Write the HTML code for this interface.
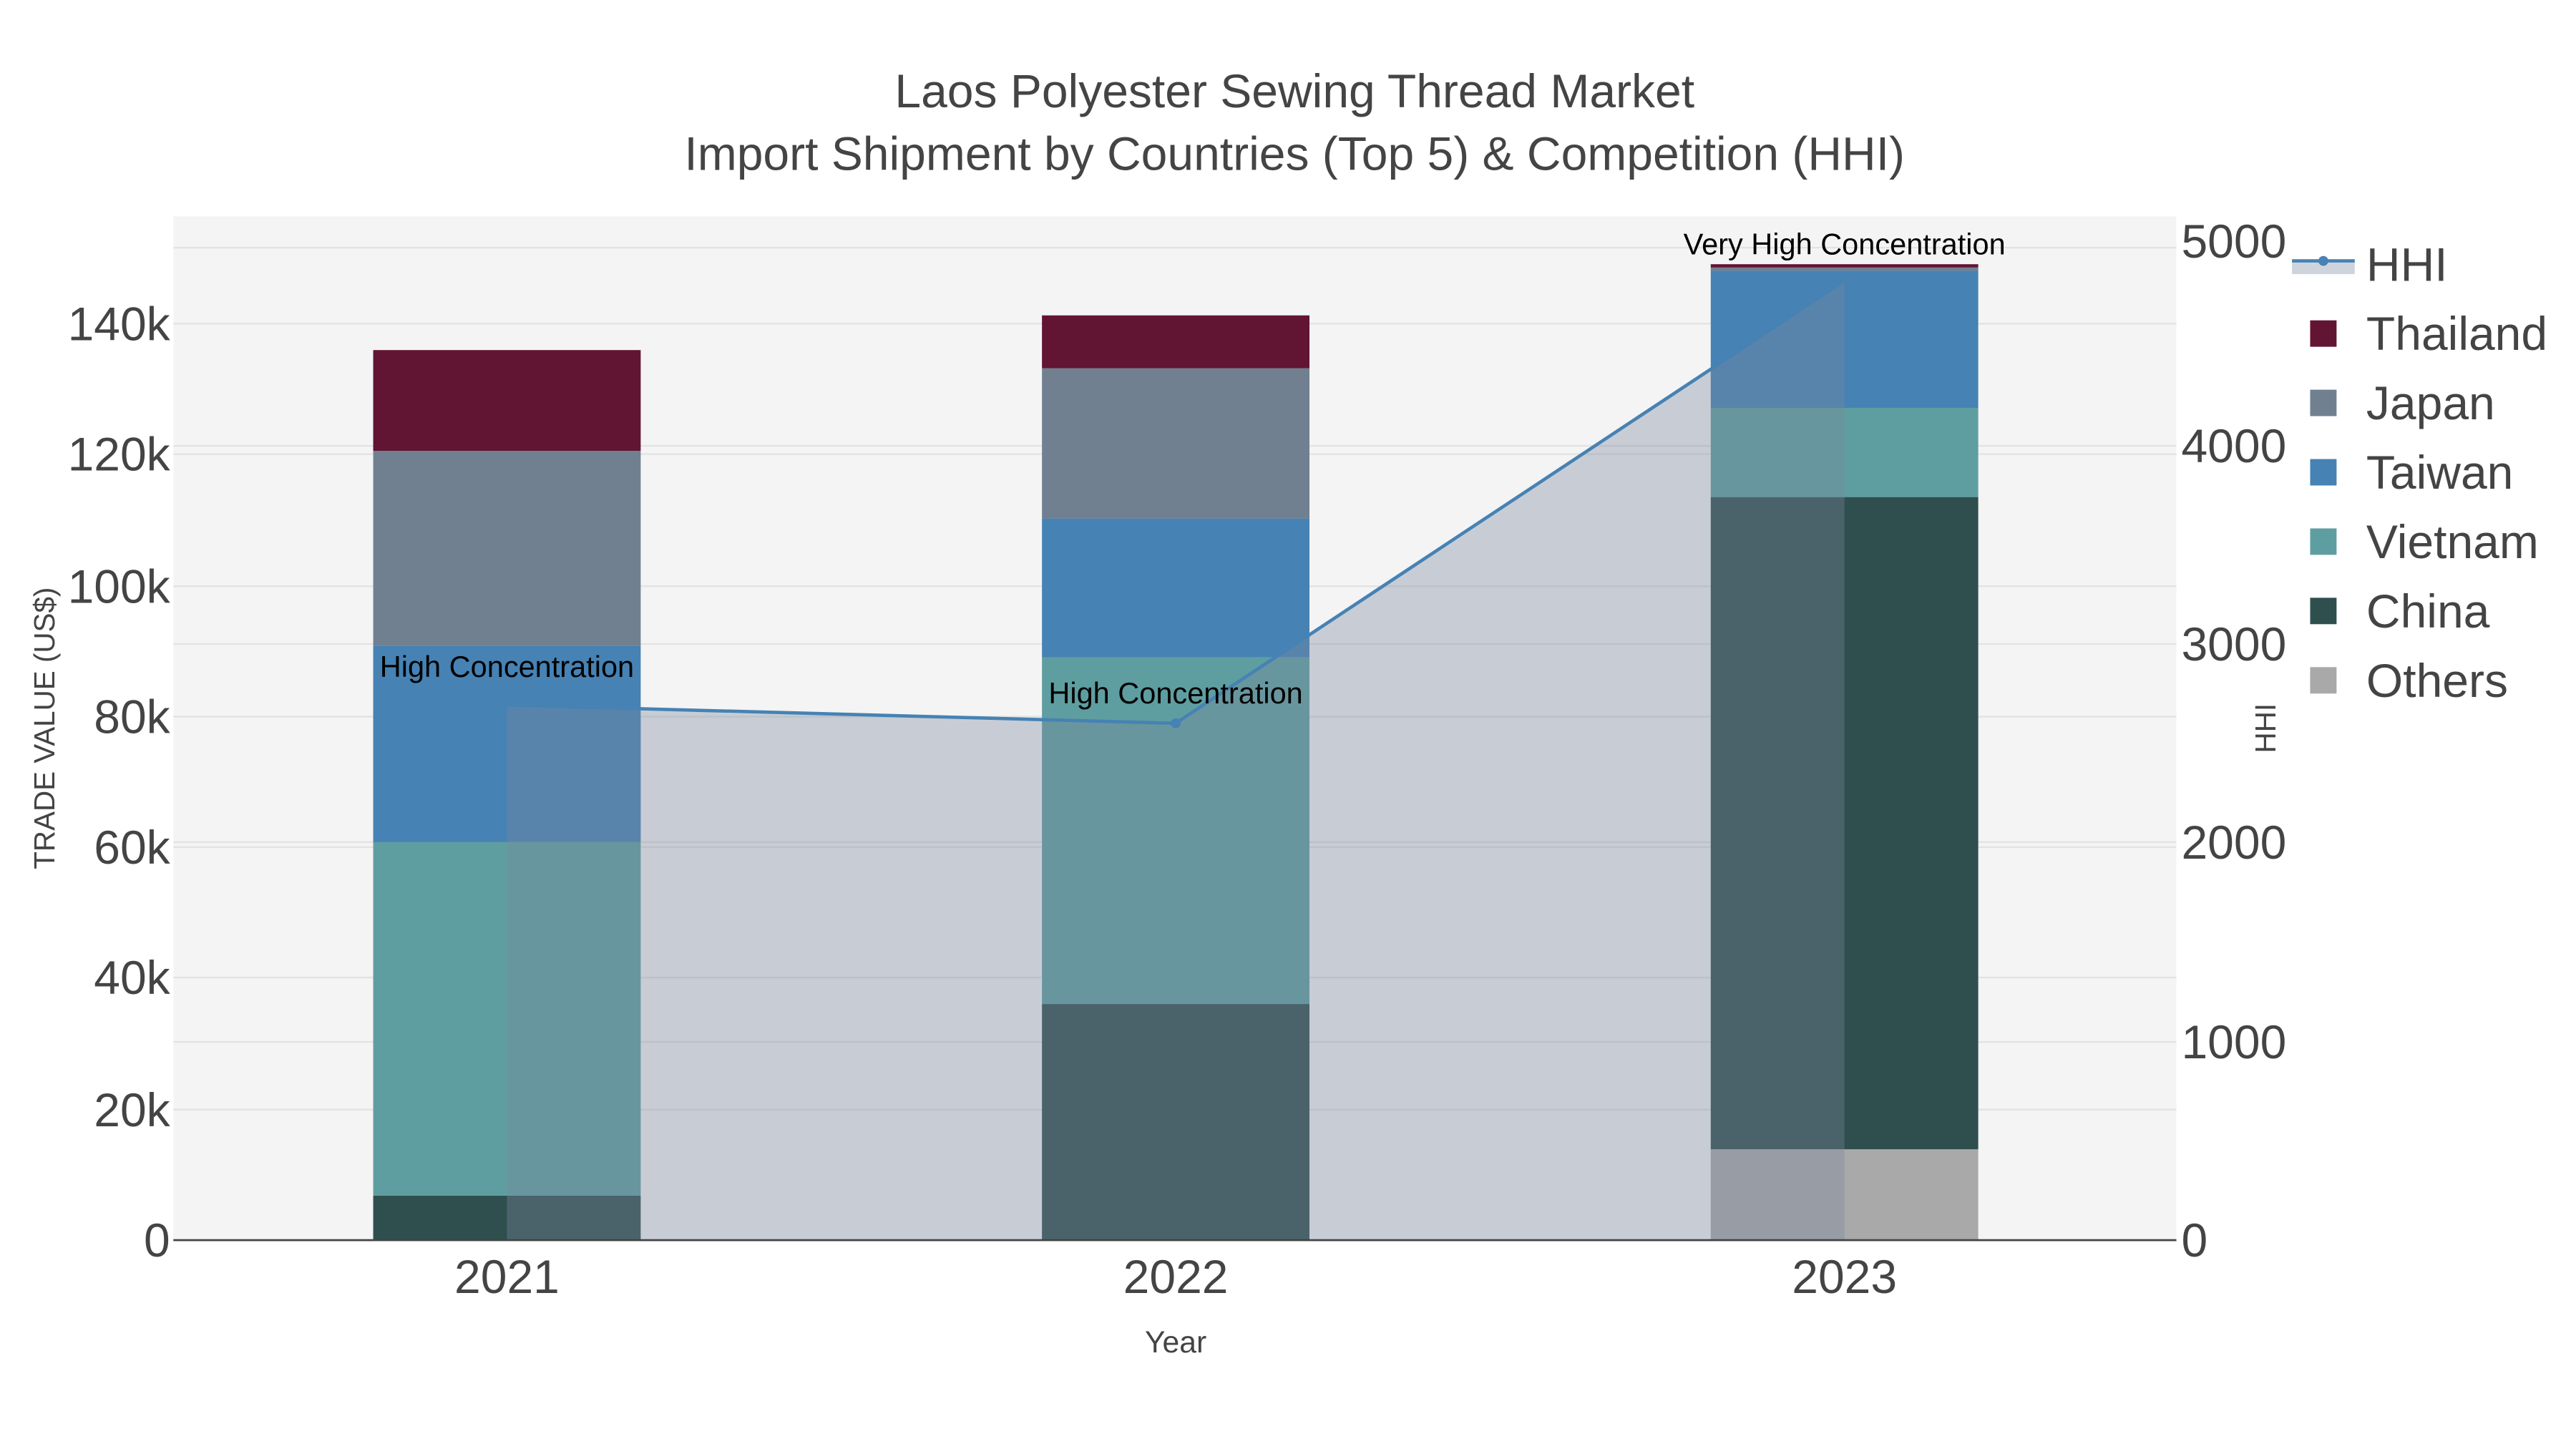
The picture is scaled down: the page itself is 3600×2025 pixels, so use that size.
<!DOCTYPE html>
<html><head><meta charset="utf-8"><style>
html,body{margin:0;padding:0;background:#fff}
svg{display:block}
text{font-family:"Liberation Sans",sans-serif}
</style></head><body>
<svg width="3600" height="2025" viewBox="0 0 1560 877.5" xmlns="http://www.w3.org/2000/svg">
<rect x="0" y="0" width="1560" height="877.5" fill="#fff"/>
<rect x="105" y="131" width="1213" height="620" fill="#f4f4f4"/>
<g stroke="#e2e2e2" stroke-width="1">
<line x1="105" x2="1318" y1="672" y2="672"/><line x1="105" x2="1318" y1="592" y2="592"/>
<line x1="105" x2="1318" y1="513" y2="513"/><line x1="105" x2="1318" y1="434" y2="434"/>
<line x1="105" x2="1318" y1="355" y2="355"/><line x1="105" x2="1318" y1="275" y2="275"/>
<line x1="105" x2="1318" y1="196" y2="196"/>
<line x1="105" x2="1318" y1="631" y2="631"/><line x1="105" x2="1318" y1="510" y2="510"/>
<line x1="105" x2="1318" y1="390" y2="390"/><line x1="105" x2="1318" y1="270" y2="270"/>
<line x1="105" x2="1318" y1="150" y2="150"/>
</g>
<rect x="226" y="724" width="162" height="27" fill="#2F4F4F"/>
<rect x="226" y="510" width="162" height="214" fill="#5F9EA0"/>
<rect x="226" y="391" width="162" height="119" fill="#4682B4"/>
<rect x="226" y="273" width="162" height="118" fill="#708090"/>
<rect x="226" y="212" width="162" height="61" fill="#621433"/>
<rect x="631" y="608" width="162" height="143" fill="#2F4F4F"/>
<rect x="631" y="398" width="162" height="210" fill="#5F9EA0"/>
<rect x="631" y="314" width="162" height="84" fill="#4682B4"/>
<rect x="631" y="223" width="162" height="91" fill="#708090"/>
<rect x="631" y="191" width="162" height="32" fill="#621433"/>
<rect x="1036" y="696" width="162" height="55" fill="#A9A9A9"/>
<rect x="1036" y="301" width="162" height="395" fill="#2F4F4F"/>
<rect x="1036" y="247" width="162" height="54" fill="#5F9EA0"/>
<rect x="1036" y="164" width="162" height="83" fill="#4682B4"/>
<rect x="1036" y="162" width="162" height="2" fill="#708090"/>
<rect x="1036" y="160" width="162" height="2" fill="#621433"/>
<polygon points="307,427 712,438 1117,170 1117,751 307,751" fill="rgb(122,136,158)" fill-opacity="0.36"/>
<polyline points="307,427 712,438 1117,170" fill="none" stroke="#4682B4" stroke-width="2"/>
<circle cx="712" cy="438" r="3" fill="#4682B4"/>
<line x1="105" x2="1318" y1="751" y2="751" stroke="#444" stroke-width="1.2"/>
<g font-size="18" fill="#000" text-anchor="middle">
<text x="307" y="410">High Concentration</text>
<text x="712" y="426">High Concentration</text>
<text x="1117" y="154">Very High Concentration</text>
</g>
<g font-size="28.6" fill="#444" text-anchor="middle">
<text x="784" y="65">Laos Polyester Sewing Thread Market</text>
<text x="784" y="103">Import Shipment by Countries (Top 5) &amp; Competition (HHI)</text>
</g>
<g font-size="28.6" fill="#444" text-anchor="end">
<text x="103" y="761">0</text><text x="103" y="682">20k</text><text x="103" y="602">40k</text>
<text x="103" y="523">60k</text><text x="103" y="444">80k</text><text x="103" y="365">100k</text>
<text x="103" y="285">120k</text><text x="103" y="206">140k</text>
</g>
<g font-size="28.6" fill="#444">
<text x="1321" y="761">0</text><text x="1321" y="641">1000</text><text x="1321" y="520">2000</text>
<text x="1321" y="400">3000</text><text x="1321" y="280">4000</text><text x="1321" y="156">5000</text>
</g>
<g font-size="28.6" fill="#444" text-anchor="middle">
<text x="307" y="783">2021</text><text x="712" y="783">2022</text><text x="1117" y="783">2023</text>
</g>
<text x="712" y="819" font-size="18.5" fill="#444" text-anchor="middle">Year</text>
<text transform="translate(33,441) rotate(-90)" font-size="17.5" fill="#444" text-anchor="middle">TRADE VALUE (US$)</text>
<text transform="translate(1378,441) rotate(-90)" font-size="17.5" fill="#444" text-anchor="middle">HHI</text>
<rect x="1388" y="158" width="38" height="8" fill="rgb(122,136,158)" fill-opacity="0.36"/>
<line x1="1388" x2="1426" y1="158" y2="158" stroke="#4682B4" stroke-width="2"/>
<circle cx="1407" cy="158" r="3" fill="#4682B4"/>
<rect x="1399" y="194" width="16" height="16" fill="#621433"/>
<rect x="1399" y="236" width="16" height="16" fill="#708090"/>
<rect x="1399" y="278" width="16" height="16" fill="#4682B4"/>
<rect x="1399" y="320" width="16" height="16" fill="#5F9EA0"/>
<rect x="1399" y="362" width="16" height="16" fill="#2F4F4F"/>
<rect x="1399" y="404" width="16" height="16" fill="#A9A9A9"/>
<g font-size="28.6" fill="#444">
<text x="1433" y="170">HHI</text><text x="1433" y="212">Thailand</text><text x="1433" y="254">Japan</text>
<text x="1433" y="296">Taiwan</text><text x="1433" y="338">Vietnam</text><text x="1433" y="380">China</text>
<text x="1433" y="422">Others</text>
</g>
</svg>
</body></html>
